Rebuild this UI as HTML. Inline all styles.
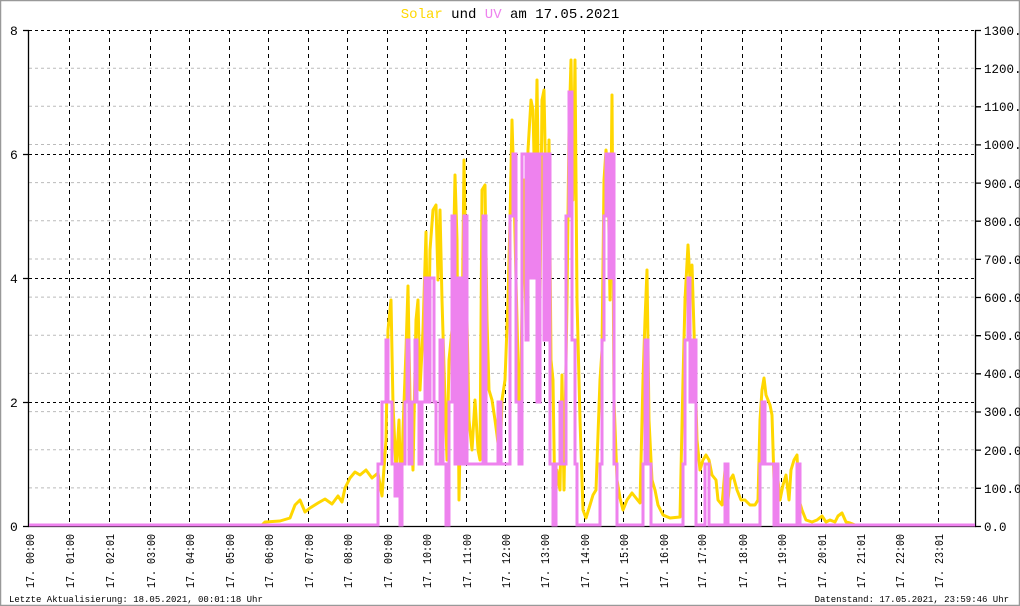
<!DOCTYPE html><html><head><style>body{margin:0;background:#fff}svg{display:block}text{font-family:"Liberation Mono","DejaVu Sans Mono",monospace}</style></head><body>
<svg width="1020" height="606" xmlns="http://www.w3.org/2000/svg">
<rect x="0.5" y="0.5" width="1019" height="605" fill="#fff" stroke="#999" stroke-width="1.5"/>
<text x="510" y="18" font-size="14" text-anchor="middle"><tspan fill="#ffd700">Solar</tspan> und <tspan fill="#ee82ee">UV</tspan> am 17.05.2021</text>
<g stroke="#bbb" stroke-dasharray="3,3" stroke-width="1">
<path d="M29 68.2H975M29 106.3H975M29 144.5H975M29 182.6H975M29 220.8H975M29 259H975M29 297.1H975M29 335.3H975M29 373.4H975M29 411.6H975M29 449.7H975M29 487.9H975"/>
</g>
<g stroke="#000" stroke-dasharray="3,3" stroke-width="1">
<path d="M29 30.5H975M29 154.5H975M29 278.5H975M29 402.5H975"/>
<path d="M69.5 30V526M109.5 30V526M150.5 30V526M189.5 30V526M229.5 30V526M268.5 30V526M308.5 30V526M347.5 30V526M387.5 30V526M426.5 30V526M466.5 30V526M505.5 30V526M544.5 30V526M584.5 30V526M623.5 30V526M663.5 30V526M701.5 30V526M742.5 30V526M781.5 30V526M821.5 30V526M860.5 30V526M899.5 30V526M938.5 30V526" stroke-dasharray="4,4"/>
</g>
<g stroke="#000" stroke-width="1.3" fill="none">
<path d="M28.5 30V526.5H975.5V30"/>
<path d="M23 30.5H29M23 154.5H29M23 278.5H29M23 402.5H29M23 526.5H29"/>
<path d="M975 30.5h6M975 68.6h6M975 106.8h6M975 144.9h6M975 183.1h6M975 221.2h6M975 259.4h6M975 297.5h6M975 335.7h6M975 373.8h6M975 412h6M975 450.1h6M975 488.3h6M975 526.5h6"/>
</g>
<g font-size="13" fill="#000">
<text x="10" y="35">8</text><text x="10" y="159">6</text><text x="10" y="283">4</text><text x="10" y="407">2</text><text x="10" y="531">0</text>
<g font-size="12.5"><text x="984" y="35">1300.0</text><text x="984" y="73">1200.0</text><text x="984" y="111">1100.0</text><text x="984" y="149">1000.0</text><text x="984" y="188">900.0</text><text x="984" y="226">800.0</text><text x="984" y="264">700.0</text><text x="984" y="302">600.0</text><text x="984" y="340">500.0</text><text x="984" y="378">400.0</text><text x="984" y="416">300.0</text><text x="984" y="455">200.0</text><text x="984" y="493">100.0</text><text x="984" y="531">0.0</text></g>
</g>
<path fill="none" stroke="#ffd700" stroke-width="3" stroke-linejoin="round" d="M29,525 262,525 265,522 280,521 290,518 295,505 300,500 305,512 310,508 318,503 325,499 332,504 338,496 342,502 345,488 350,478 355,472 360,475 366,470 372,478 378,473 382,496 386,440 388,330 391,300 393,405 396,470 399,420 401,500 403,430 406,350 408,286 410,400 413,470 416,320 418,300 420,390 423,330 426,232 428,380 430,250 433,210 436,205 438,280 440,210 442,300 445,400 447,460 449,360 452,330 455,175 457,240 459,500 462,340 464,160 466,270 469,420 472,450 475,400 478,450 480,460 482,190 485,185 487,320 489,390 492,400 495,420 497,435 500,460 502,400 505,380 508,300 510,220 512,120 514,190 516,280 519,400 521,370 524,180 526,330 528,150 531,100 533,110 535,200 537,80 540,300 542,100 544,90 547,250 549,140 551,360 553,380 555,510 557,470 560,490 562,375 564,490 567,300 569,130 571,60 573,200 575,60 577,300 580,420 583,510 586,518 590,505 593,495 596,490 600,380 602,350 604,180 606,150 608,170 610,300 612,95 614,400 617,480 620,498 623,510 627,500 632,493 636,498 640,503 643,380 645,320 647,270 649,420 652,480 655,490 658,505 663,515 670,518 680,517 683,380 685,300 688,245 690,280 692,265 694,330 697,440 700,470 703,460 706,455 709,460 712,475 716,480 718,500 722,505 725,470 728,500 730,480 733,475 737,490 741,500 745,500 750,505 755,505 758,500 760,420 762,390 764,378 766,395 768,400 770,405 772,415 774,480 777,470 780,500 783,485 786,475 789,500 791,470 794,460 797,455 799,500 802,510 806,520 812,522 817,520 822,516 826,522 830,520 835,522 838,516 842,513 846,522 850,523 855,525 975,525"/>
<path fill="none" stroke="#ee82ee" stroke-width="3" d="M29,525 378,525 378,464 382,464 382,402 386,402 386,340 388,340 388,402 392,402 392,464 395,464 395,496 398,496 398,464 400,464 400,525 402,525 402,464 405,464 405,402 407,402 407,340 409,340 409,464 412,464 412,402 415,402 415,340 417,340 417,402 419,402 419,464 422,464 422,402 425,402 425,278 428,278 428,402 430,402 430,278 434,278 434,402 436,402 436,464 440,464 440,340 443,340 443,464 446,464 446,525 449,525 449,402 452,402 452,216 455,216 455,464 458,464 458,278 461,278 461,464 464,464 464,216 467,216 467,464 483,464 483,216 486,216 486,464 498,464 498,402 501,402 501,464 510,464 510,216 513,216 513,154 516,154 516,402 519,402 519,464 522,464 522,154 526,154 526,340 528,340 528,154 531,154 531,278 534,278 534,154 537,154 537,402 540,402 540,154 544,154 544,340 547,340 547,154 550,154 550,464 553,464 553,525 556,525 556,464 560,464 560,402 562,402 562,464 566,464 566,216 569,216 569,92 572,92 572,340 575,340 575,464 577,464 577,525 600,525 600,464 602,464 602,340 604,340 604,216 606,216 606,154 609,154 609,278 611,278 611,154 614,154 614,464 617,464 617,525 643,525 643,464 645,464 645,340 648,340 648,464 651,464 651,525 683,525 683,464 685,464 685,340 688,340 688,278 690,278 690,402 693,402 693,340 696,340 696,525 705,525 705,464 709,464 709,525 725,525 725,464 728,464 728,525 760,525 760,464 762,464 762,402 765,402 765,464 774,464 774,525 776,525 776,464 778,464 778,525 797,525 797,464 800,464 800,525 975,525"/>
<g font-size="12" fill="#000">
<g transform="translate(34,588) rotate(-90)"><text textLength="54" lengthAdjust="spacingAndGlyphs">17. 00:00</text></g>
<g transform="translate(74,588) rotate(-90)"><text textLength="54" lengthAdjust="spacingAndGlyphs">17. 01:00</text></g>
<g transform="translate(114,588) rotate(-90)"><text textLength="54" lengthAdjust="spacingAndGlyphs">17. 02:01</text></g>
<g transform="translate(155,588) rotate(-90)"><text textLength="54" lengthAdjust="spacingAndGlyphs">17. 03:00</text></g>
<g transform="translate(194,588) rotate(-90)"><text textLength="54" lengthAdjust="spacingAndGlyphs">17. 04:00</text></g>
<g transform="translate(234,588) rotate(-90)"><text textLength="54" lengthAdjust="spacingAndGlyphs">17. 05:00</text></g>
<g transform="translate(273,588) rotate(-90)"><text textLength="54" lengthAdjust="spacingAndGlyphs">17. 06:00</text></g>
<g transform="translate(313,588) rotate(-90)"><text textLength="54" lengthAdjust="spacingAndGlyphs">17. 07:00</text></g>
<g transform="translate(352,588) rotate(-90)"><text textLength="54" lengthAdjust="spacingAndGlyphs">17. 08:00</text></g>
<g transform="translate(392,588) rotate(-90)"><text textLength="54" lengthAdjust="spacingAndGlyphs">17. 09:00</text></g>
<g transform="translate(431,588) rotate(-90)"><text textLength="54" lengthAdjust="spacingAndGlyphs">17. 10:00</text></g>
<g transform="translate(471,588) rotate(-90)"><text textLength="54" lengthAdjust="spacingAndGlyphs">17. 11:00</text></g>
<g transform="translate(510,588) rotate(-90)"><text textLength="54" lengthAdjust="spacingAndGlyphs">17. 12:00</text></g>
<g transform="translate(549,588) rotate(-90)"><text textLength="54" lengthAdjust="spacingAndGlyphs">17. 13:00</text></g>
<g transform="translate(589,588) rotate(-90)"><text textLength="54" lengthAdjust="spacingAndGlyphs">17. 14:00</text></g>
<g transform="translate(628,588) rotate(-90)"><text textLength="54" lengthAdjust="spacingAndGlyphs">17. 15:00</text></g>
<g transform="translate(668,588) rotate(-90)"><text textLength="54" lengthAdjust="spacingAndGlyphs">17. 16:00</text></g>
<g transform="translate(706,588) rotate(-90)"><text textLength="54" lengthAdjust="spacingAndGlyphs">17. 17:00</text></g>
<g transform="translate(747,588) rotate(-90)"><text textLength="54" lengthAdjust="spacingAndGlyphs">17. 18:00</text></g>
<g transform="translate(786,588) rotate(-90)"><text textLength="54" lengthAdjust="spacingAndGlyphs">17. 19:00</text></g>
<g transform="translate(826,588) rotate(-90)"><text textLength="54" lengthAdjust="spacingAndGlyphs">17. 20:01</text></g>
<g transform="translate(865,588) rotate(-90)"><text textLength="54" lengthAdjust="spacingAndGlyphs">17. 21:01</text></g>
<g transform="translate(904,588) rotate(-90)"><text textLength="54" lengthAdjust="spacingAndGlyphs">17. 22:00</text></g>
<g transform="translate(943,588) rotate(-90)"><text textLength="54" lengthAdjust="spacingAndGlyphs">17. 23:01</text></g>
</g>
<text x="9" y="602" font-size="9">Letzte Aktualisierung: 18.05.2021, 00:01:18 Uhr</text>
<text x="1009" y="602" font-size="9" text-anchor="end">Datenstand: 17.05.2021, 23:59:46 Uhr</text>
</svg>
</body></html>
